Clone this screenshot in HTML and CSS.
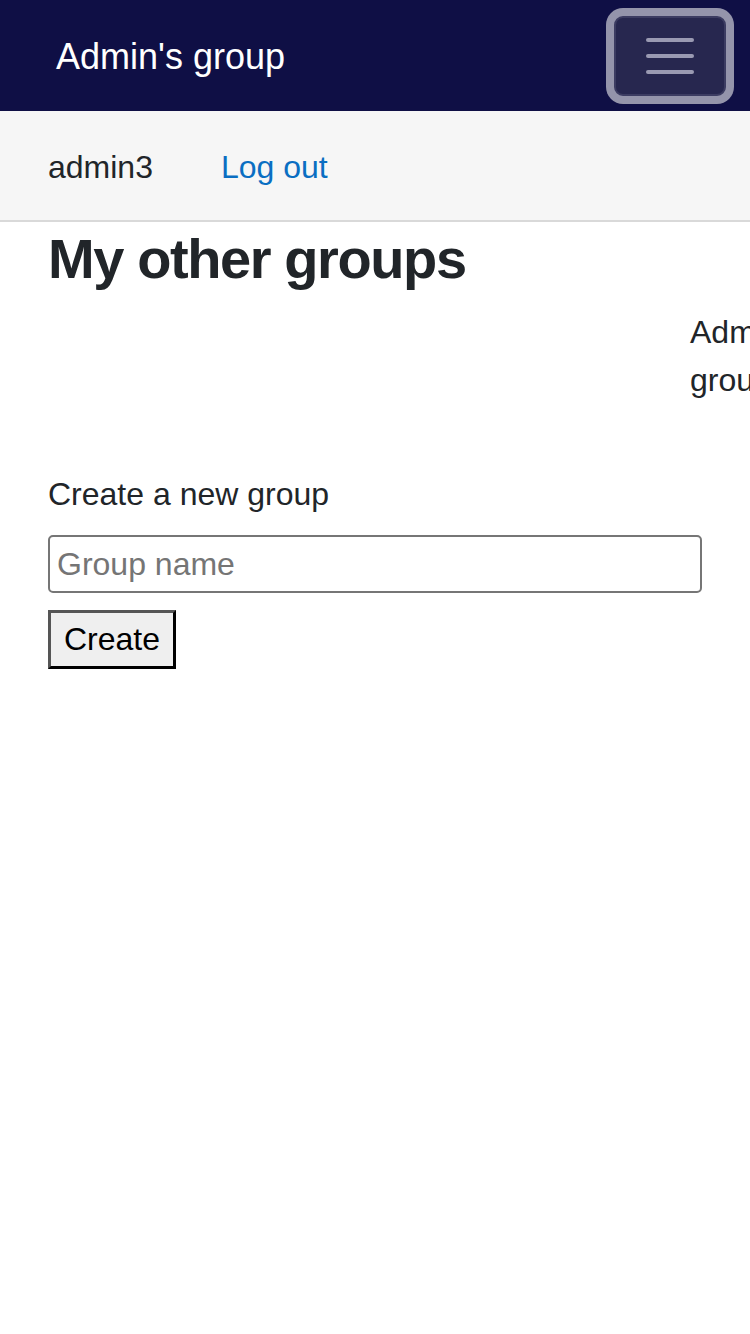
FILE: index.html
```html
<!DOCTYPE html>
<html lang="en">
<head>
<meta charset="utf-8">
<title>Admin's group</title>
<link rel="stylesheet" href="styles.css">
</head>
<body>
<header class="navbar">
  <a class="brand" href="#">Admin's group</a>
  <button class="toggler" type="button" aria-label="Toggle navigation">
    <span class="toggler-icon"><span></span><span></span><span></span></span>
  </button>
</header>
<nav class="subnav">
  <span class="user">admin3</span>
  <a class="logout" href="#">Log out</a>
</nav>
<main class="content">
  <h1 class="title">My other groups</h1>
  <div class="groups-row">
    <div class="groups-spacer"></div>
    <div class="group-item">Admin's group</div>
  </div>
  <form class="create-form">
    <label class="create-label" for="gname">Create a new group</label>
    <input class="create-input" id="gname" type="text" placeholder="Group name">
    <button class="create-btn" type="button">Create</button>
  </form>
</main>
</body>
</html>
```
FILE: styles.css
```css
html, body {
  margin: 0;
  padding: 0;
  overflow-x: hidden;
}
body {
  font-family: "Liberation Sans", Arial, sans-serif;
  color: #212529;
  background: #fff;
  width: 750px;
}
.navbar {
  height: 111px;
  background: #0f0f45;
  display: flex;
  align-items: center;
  justify-content: space-between;
  padding: 0 24px 0 56px;
  box-sizing: border-box;
}
.brand {
  color: #fff;
  font-size: 36px;
  text-decoration: none;
  line-height: 1;
  margin-top: 2px;
}
.toggler {
  width: 112px;
  height: 80px;
  box-sizing: border-box;
  background: #27274f;
  border: 2px solid #3c3c62;
  border-radius: 9px;
  box-shadow: 0 0 0 8px #9494ab;
  display: flex;
  align-items: center;
  justify-content: center;
  padding: 0;
  margin-top: 1px;
}
.toggler-icon {
  display: flex;
  flex-direction: column;
  gap: 12px;
}
.toggler-icon span {
  display: block;
  width: 48px;
  height: 4px;
  border-radius: 2px;
  background: #9a9ab2;
}
.subnav {
  height: 111px;
  background: #f6f6f6;
  border-bottom: 2px solid #d9d9d9;
  display: flex;
  align-items: center;
  padding-left: 48px;
  gap: 68px;
  font-size: 32px;
  box-sizing: border-box;
  padding-top: 3px;
}
.user {
  color: #212529;
}
.logout {
  color: #0a6ec2;
  text-decoration: none;
}
.content {
  padding: 3px 0 0 48px;
}
.title {
  margin: 0 0 16px;
  font-size: 56px;
  font-weight: bold;
  letter-spacing: -1.4px;
  line-height: 1.2;
  color: #212529;
}
.groups-row {
  display: flex;
  font-size: 32px;
  line-height: 48px;
  margin-bottom: 66px;
}
.groups-spacer {
  width: 642px;
  flex: none;
}
.group-item {
  width: 140px;
  flex: none;
}
.create-form {
  display: flex;
  flex-direction: column;
  align-items: flex-start;
}
.create-label {
  font-size: 32px;
  line-height: 48px;
  margin-bottom: 17px;
}
.create-input {
  width: 654px;
  height: 58px;
  box-sizing: border-box;
  border: 2px solid #767676;
  border-radius: 5px;
  font-family: "Liberation Sans", Arial, sans-serif;
  font-size: 32px;
  padding: 0 7px;
  color: #212529;
  margin: 0;
}
.create-input::placeholder {
  color: #757575;
}
.create-btn {
  margin-top: 17px;
  height: 59px;
  box-sizing: border-box;
  background: #efefef;
  border: 3px solid;
  border-color: #555 #000 #000 #555;
  font-family: "Liberation Sans", Arial, sans-serif;
  font-size: 32px;
  color: #000;
  padding: 0 13px;
}
```
